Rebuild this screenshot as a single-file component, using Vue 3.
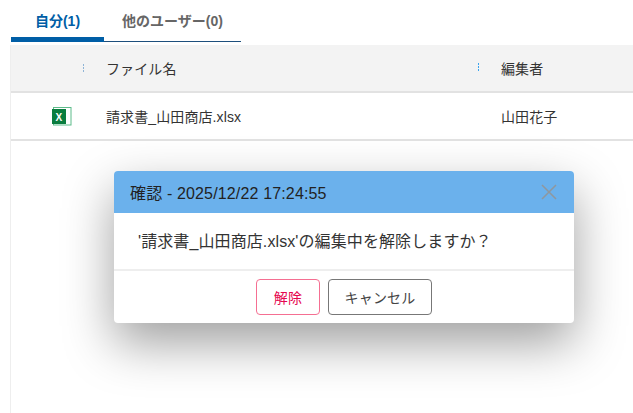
<script setup>
const tabs = [
  { label: '自分(1)', active: true },
  { label: '他のユーザー(0)', active: false }
]
</script>

<template>
  <div class="page">
    <div class="tabs">
      <div v-for="tab in tabs" :key="tab.label" class="tab" :class="{ active: tab.active }">{{ tab.label }}</div>
    </div>
    <div class="table">
      <div class="row head">
        <div class="cell icon"><span class="grip pale"></span></div>
        <div class="cell name"><span>ファイル名</span><span class="grip"></span></div>
        <div class="cell editor">編集者</div>
      </div>
      <div class="row body-row">
        <div class="cell icon">
          <svg class="xl" width="20" height="20" viewBox="0 0 20 20">
            <rect x="1.5" y="1.5" width="17.5" height="17.5" fill="#fff" stroke="#5dbb8a" />
            <rect x="0" y="3" width="14" height="15" fill="#0a7d3f" />
            <text x="7" y="15" text-anchor="middle" class="xl-text">X</text>
          </svg>
        </div>
        <div class="cell name">請求書_山田商店.xlsx</div>
        <div class="cell editor">山田花子</div>
      </div>
    </div>
    <div class="dialog">
      <div class="dialog-head">
        <span>確認 - 2025/12/22 17:24:55</span>
        <svg class="close" width="16" height="16" viewBox="0 0 16 16">
          <path d="M1 1 L15 15 M15 1 L1 15" stroke="#8f979e" stroke-width="1.5" fill="none" />
        </svg>
      </div>
      <div class="dialog-body">'請求書_山田商店.xlsx'の編集中を解除しますか？</div>
      <div class="dialog-foot">
        <button class="btn danger">解除</button>
        <button class="btn">キャンセル</button>
      </div>
    </div>
  </div>
</template>

<style>
html, body { margin: 0; background: #fff; }
</style>

<style scoped>
.page {
  position: relative;
  width: 633px;
  height: 413px;
  overflow: hidden;
  background: #fff;
  box-sizing: border-box;
  padding: 0 0 0 10px;
  font-family: "Liberation Sans", "Noto Sans CJK JP", sans-serif;
  color: #333;
}
.tabs {
  display: flex;
  width: 230px;
  height: 42px;
  margin-left: 1px;
  box-sizing: border-box;
  border-bottom: 1px solid #1d4f7c;
}
.tab {
  height: 42px;
  box-sizing: border-box;
  padding-top: 12px;
  font-size: 14px;
  line-height: 18px;
  font-weight: 700;
  color: #666;
  width: 137px;
  text-align: center;
}
.tab.active {
  width: 93px;
  color: #005ea6;
  border-bottom: 5px solid #005ea6;
}
.table {
  margin-top: 3px;
  border-left: 1px solid #eee;
  height: 368px;
}
.row {
  display: flex;
  align-items: center;
  height: 48px;
  box-sizing: border-box;
  border-bottom: 2px solid #e2e2e2;
  font-size: 14px;
  letter-spacing: 0.1px;
  color: #333;
}
.head { background: #f3f3f3; }
.cell { display: flex; align-items: center; height: 100%; box-sizing: border-box; padding-bottom: 1px; }
.icon { width: 95px; padding-left: 41px; padding-bottom: 0; position: relative; }
.name { width: 395px; justify-content: space-between; position: relative; }
.editor { flex: 1; }
.grip {
  display: block;
  width: 1px;
  height: 9px;
  margin-right: 22px;
  background-image: linear-gradient(#3ba4ee 2px, transparent 2px);
  background-size: 1px 3px;
}
.grip.pale {
  position: absolute;
  left: 72px;
  top: 19px;
  margin: 0;
  background-image: linear-gradient(#8fb4d6 2px, transparent 2px);
  background-size: 1px 3px;
}
.xl { display: block; }
.xl-text { font-size: 10px; font-weight: 700; fill: #fff; font-family: "Liberation Sans", sans-serif; }
.dialog {
  position: absolute;
  left: 114px;
  top: 171px;
  width: 460px;
  height: 152px;
  background: #fff;
  border-radius: 4px;
  box-shadow: 0 20px 50px rgba(0, 0, 0, 0.38);
  display: flex;
  flex-direction: column;
}
.dialog-head {
  height: 42px;
  flex: none;
  background: #6bb1ec;
  border-radius: 4px 4px 0 0;
  display: flex;
  align-items: center;
  justify-content: space-between;
  padding: 0 17px 0 16px;
  font-size: 16px;
  letter-spacing: 0.15px;
  color: #222;
}
.dialog-body {
  height: 58px;
  flex: none;
  box-sizing: border-box;
  padding: 18px 0 0 24px;
  font-size: 16px;
  line-height: 22px;
  letter-spacing: 0.1px;
  color: #333;
  border-bottom: 2px solid #eee;
}
.dialog-foot {
  flex: 1;
  display: flex;
  justify-content: center;
  align-items: flex-start;
  gap: 8px;
  padding-top: 8px;
}
.btn {
  height: 36px;
  box-sizing: border-box;
  padding: 0 15px;
  width: 104px;
  background: #fff;
  border: 1px solid #777;
  border-radius: 4px;
  font-family: inherit;
  font-size: 14px;
  letter-spacing: 0.2px;
  color: #444;
}
.btn.danger {
  width: 64px;
  padding: 0;
  border-color: #f56f92;
  color: #e5064f;
}
</style>
